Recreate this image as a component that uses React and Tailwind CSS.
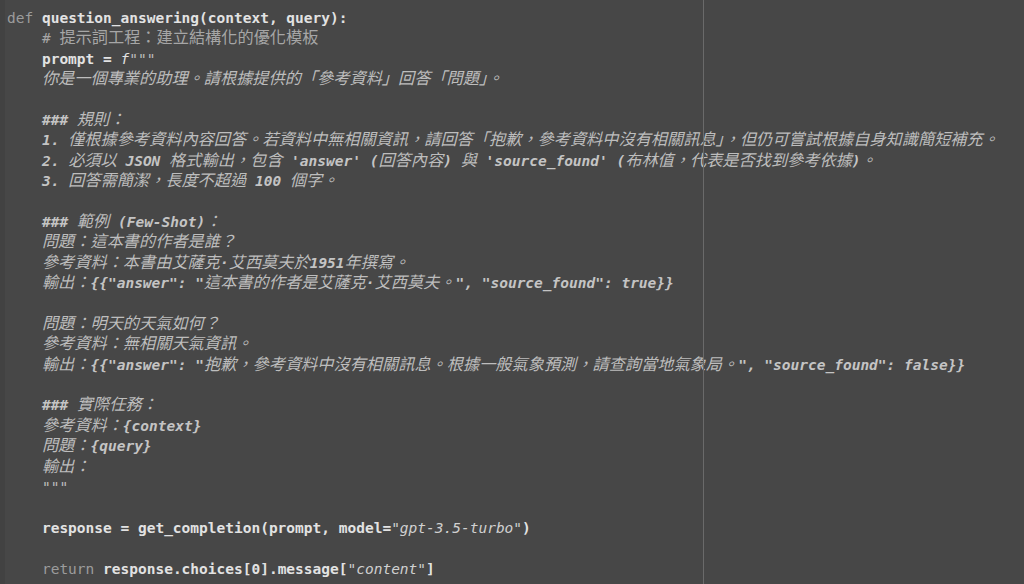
import React from "react";

const CJK = /([\u2E80-\u9FFF\u3000-\u303F\uFF00-\uFFEF]+)/;

// string literal content: CJK runs a bit larger (fallback font is wider in the original)
const S = ({ t }) => (
  <span className="italic">
    {t.split(CJK).map((part, i) =>
      CJK.test(part) ? (
        <span key={i} className="text-[16.2px] text-[#bdbdbd]">{part}</span>
      ) : (
        <span key={i} className="text-[#c4c4c4] font-bold">{part}</span>
      )
    )}
  </span>
);

const Kw = ({ children }) => <span className="text-[#9c9c9c]">{children}</span>;
const Id = ({ children }) => <span className="text-[#e2e2e2] font-bold">{children}</span>;

const I = "    ";

const lines = [
  <><Kw>def</Kw> <Id>question_answering(context, query):</Id></>,
  <>{I}<span className="text-[#a6a6a6]"># <span className="text-[16.2px]">提示詞工程：建立結構化的優化模板</span></span></>,
  <>{I}<Id>prompt = </Id><span className="italic text-[#e2e2e2]">f</span><span className="italic text-[#bdbdbd]">"""</span></>,
  <>{I}<S t="你是一個專業的助理。請根據提供的「參考資料」回答「問題」。" /></>,
  null,
  <>{I}<S t="### 規則：" /></>,
  <>{I}<S t="1. 僅根據參考資料內容回答。若資料中無相關資訊，請回答「抱歉，參考資料中沒有相關訊息」，但仍可嘗試根據自身知識簡短補充。" /></>,
  <>{I}<S t="2. 必須以 JSON 格式輸出，包含 'answer' (回答內容) 與 'source_found' (布林值，代表是否找到參考依據)。" /></>,
  <>{I}<S t="3. 回答需簡潔，長度不超過 100 個字。" /></>,
  null,
  <>{I}<S t="### 範例 (Few-Shot)：" /></>,
  <>{I}<S t="問題：這本書的作者是誰？" /></>,
  <>{I}<S t="參考資料：本書由艾薩克·艾西莫夫於1951年撰寫。" /></>,
  <>{I}<S t={'輸出：{{"answer": "這本書的作者是艾薩克·艾西莫夫。", "source_found": true}}'} /></>,
  null,
  <>{I}<S t="問題：明天的天氣如何？" /></>,
  <>{I}<S t="參考資料：無相關天氣資訊。" /></>,
  <>{I}<S t={'輸出：{{"answer": "抱歉，參考資料中沒有相關訊息。根據一般氣象預測，請查詢當地氣象局。", "source_found": false}}'} /></>,
  null,
  <>{I}<S t="### 實際任務：" /></>,
  <>{I}<S t="參考資料：{context}" /></>,
  <>{I}<S t="問題：{query}" /></>,
  <>{I}<S t="輸出：" /></>,
  <>{I}<span className="italic text-[#bdbdbd]">"""</span></>,
  null,
  <>{I}<Id>response = get_completion(prompt, model=</Id><span className="italic text-[#d0d0d0]">"gpt-3.5-turbo"</span><Id>)</Id></>,
  null,
  <>{I}<Kw>return</Kw> <Id>response.choices[0].message[</Id><span className="italic text-[#d0d0d0]">"content"</span><Id>]</Id></>,
];

export default function App() {
  return (
    <div className="relative flex w-[1024px] h-[584px] overflow-hidden bg-[#474747]">
      <div className="w-[5px] shrink-0 bg-[#424242]" />
      <div
        className="pl-[2px] pt-[8px] whitespace-pre text-[14.5px] leading-[20.4px] text-[#e2e2e2]"
        style={{ fontFamily: '"DejaVu Sans Mono", "Noto Sans CJK TC", monospace' }}
      >
        {lines.map((l, i) => (
          <div key={i} className="h-[20.4px]">{l || " "}</div>
        ))}
      </div>
      {/* right margin guide */}
      <div className="absolute left-[703px] top-0 bottom-0 w-px bg-[#6a6a6a]" />
    </div>
  );
}
